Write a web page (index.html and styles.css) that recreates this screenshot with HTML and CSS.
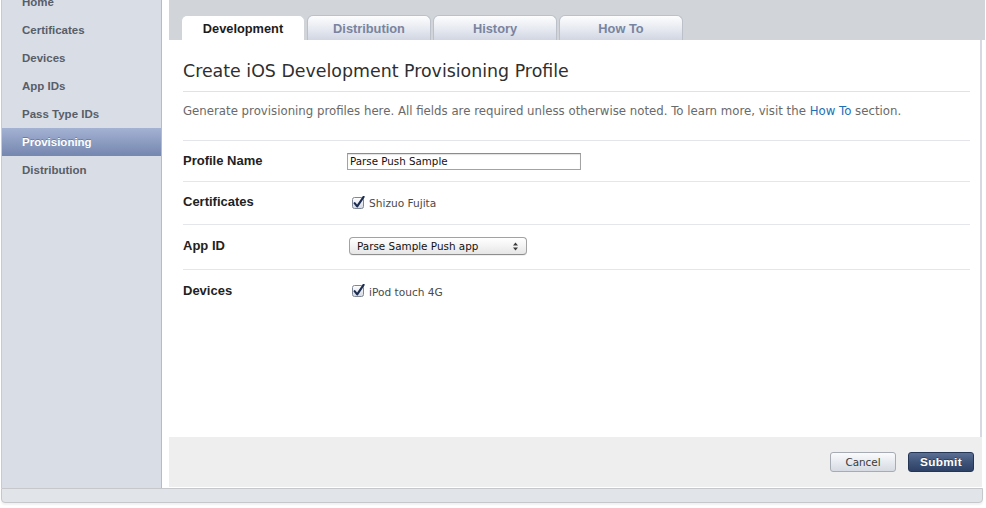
FILE: index.html
```html
<!DOCTYPE html>
<html lang="en">
<head>
<meta charset="utf-8">
<title>Create iOS Development Provisioning Profile</title>
<link rel="stylesheet" href="styles.css">
</head>
<body>
<div class="page">
  <div class="shell">
    <aside class="sidebar">
      <ul class="nav">
        <li class="nav-item">Home</li>
        <li class="nav-item">Certificates</li>
        <li class="nav-item">Devices</li>
        <li class="nav-item">App IDs</li>
        <li class="nav-item">Pass Type IDs</li>
        <li class="nav-item is-active">Provisioning</li>
        <li class="nav-item">Distribution</li>
      </ul>
    </aside>
    <main class="main">
      <div class="tabstrip">
        <div class="tab is-active">Development</div>
        <div class="tab">Distribution</div>
        <div class="tab">History</div>
        <div class="tab">How To</div>
      </div>
      <section class="panel">
        <h1 class="title">Create iOS Development Provisioning Profile</h1>
        <p class="intro">Generate provisioning profiles here. All fields are required unless otherwise noted. To learn more, visit the <a class="link" href="#">How To</a> section.</p>
        <div class="row row-name">
          <div class="label">Profile Name</div>
          <div class="control"><input class="text-input" type="text" value="Parse Push Sample"></div>
        </div>
        <div class="row row-cert">
          <div class="label">Certificates</div>
          <div class="control">
            <span class="check">
              <svg class="checkbox" width="13" height="13" viewBox="0 0 13 13">
                <defs>
                  <linearGradient id="cbg" x1="0" y1="0" x2="0" y2="1">
                    <stop offset="0" stop-color="#ffffff"/>
                    <stop offset="1" stop-color="#d3d8e2"/>
                  </linearGradient>
                </defs>
                <rect x="0.5" y="1.5" width="11" height="11" rx="2" fill="url(#cbg)" stroke="#7f8796"/>
                <path d="M2.6 7.2 L5.2 10.4 L11.6 0.8" fill="none" stroke="#1c2d52" stroke-width="2.1" stroke-linecap="round" stroke-linejoin="round"/>
              </svg>
              <span class="check-text">Shizuo Fujita</span>
            </span>
          </div>
        </div>
        <div class="row row-app">
          <div class="label">App ID</div>
          <div class="control">
            <div class="select">
              <span class="select-text">Parse Sample Push app</span>
              <svg class="select-arrows" width="5" height="9" viewBox="0 0 5 9">
                <path d="M0 3.6 L2.5 0.4 L5 3.6 Z M0 5.4 L2.5 8.6 L5 5.4 Z" fill="#3a3a3a"/>
              </svg>
            </div>
          </div>
        </div>
        <div class="row row-dev">
          <div class="label">Devices</div>
          <div class="control">
            <span class="check">
              <svg class="checkbox" width="13" height="13" viewBox="0 0 13 13">
                <defs>
                  <linearGradient id="cbg2" x1="0" y1="0" x2="0" y2="1">
                    <stop offset="0" stop-color="#ffffff"/>
                    <stop offset="1" stop-color="#d3d8e2"/>
                  </linearGradient>
                </defs>
                <rect x="0.5" y="1.5" width="11" height="11" rx="2" fill="url(#cbg2)" stroke="#7f8796"/>
                <path d="M2.6 7.2 L5.2 10.4 L11.6 0.8" fill="none" stroke="#1c2d52" stroke-width="2.1" stroke-linecap="round" stroke-linejoin="round"/>
              </svg>
              <span class="check-text">iPod touch 4G</span>
            </span>
          </div>
        </div>
      </section>
      <footer class="actions">
        <button class="btn btn-cancel" type="button">Cancel</button>
        <button class="btn btn-submit" type="button">Submit</button>
      </footer>
    </main>
  </div>
  <div class="bottombar"></div>
</div>
</body>
</html>
```

FILE: styles.css
```css
* { box-sizing: border-box; }

html, body {
  margin: 0;
  padding: 0;
  background: #ffffff;
  font-family: "DejaVu Sans", Verdana, sans-serif;
  color: #333;
}

.page {
  width: 986px;
  height: 508px;
  overflow: hidden;
}

.shell {
  display: flex;
  width: 985px;
  height: 488px;
  margin-left: 1px;
  border-left: 1px solid #c6cad1;
}

/* Sidebar */
.sidebar {
  width: 160px;
  flex: none;
  background: #d8dde6;
  border-right: 1px solid #b6bbc6;
  overflow: hidden;
}

.nav {
  list-style: none;
  margin: -12px 0 0 0;
  padding: 0;
}

.nav-item {
  height: 28px;
  line-height: 28px;
  padding-left: 20px;
  font-family: "Liberation Sans", Arial, sans-serif;
  font-size: 11.5px;
  font-weight: bold;
  color: #585e68;
}

.nav-item.is-active {
  background: linear-gradient(#a3b2d3, #7586af);
  color: #ffffff;
  text-shadow: 0 -1px 0 rgba(40, 50, 80, 0.35);
}

/* Main */
.main {
  flex: 1;
  display: flex;
  flex-direction: column;
  padding-left: 7px;
  padding-right: 1px;
}

.tabstrip {
  height: 40px;
  flex: none;
  background: #d1d5d9;
  display: flex;
  align-items: flex-end;
  padding-left: 12px;
  gap: 2px;
}

.tab {
  width: 124px;
  height: 25px;
  display: flex;
  align-items: center;
  justify-content: center;
  border: 1px solid #bcc0c8;
  border-bottom: none;
  border-radius: 6px 6px 0 0;
  background: linear-gradient(#fdfdfe, #e6e9f0 55%, #d1d6e2);
  color: #7884a0;
  font-family: "Liberation Sans", Arial, sans-serif;
  font-size: 12.8px;
  font-weight: bold;
}

.tab.is-active {
  background: #ffffff;
  border-color: #d0d3d8;
  color: #1c1c1c;
}

.panel {
  height: 397px;
  flex: none;
  margin-right: 3px;
  background: #ffffff;
  border-right: 2px solid #d8d8e2;
  padding: 0 10px 0 14px;
}

.title {
  margin: 20px 0 0 0;
  padding-bottom: 9px;
  border-bottom: 1px solid #e1e2e6;
  font-size: 17.4px;
  line-height: 22px;
  font-weight: normal;
  color: #2f2f2f;
}

.intro {
  margin: 11px 0 0 0;
  padding-bottom: 21px;
  border-bottom: 1px solid #e4e5ea;
  font-size: 11.75px;
  line-height: 16px;
  color: #6a6a6a;
  white-space: nowrap;
}

.link {
  color: #1e6fb5;
  text-decoration: none;
}

.row {
  display: grid;
  grid-template-columns: 164px 1fr;
  align-items: center;
  border-bottom: 1px solid #e4e6ec;
}

.row-name { height: 41px; }
.row-cert { height: 43px; padding-bottom: 2px; }
.row-app  { height: 45px; padding-bottom: 2px; }
.row-dev  { height: 41px; border-bottom: none; }

.label {
  font-family: "Liberation Sans", Arial, sans-serif;
  font-size: 13px;
  line-height: 16px;
  font-weight: bold;
  color: #222;
}

.control {
  display: flex;
  align-items: center;
}

.text-input {
  width: 234px;
  height: 17px;
  margin: 0;
  padding: 0 0 0 2px;
  border: 1px solid #a3a3a3;
  border-top-color: #8c8c8c;
  box-shadow: inset 0 1px 1px rgba(0, 0, 0, 0.12);
  font-family: "DejaVu Sans", Verdana, sans-serif;
  font-size: 10.3px;
  color: #111;
  background: #ffffff;
  outline: none;
}

.check {
  display: flex;
  align-items: center;
  margin-left: 5px;
  gap: 4px;
}

.checkbox {
  display: block;
  flex: none;
}

.check-text {
  font-size: 10.6px;
  line-height: 14px;
  color: #4a4a4a;
  padding-top: 2px;
}

.select {
  margin-left: 2px;
  width: 178px;
  height: 18px;
  display: flex;
  align-items: center;
  justify-content: space-between;
  padding: 0 8px 0 7px;
  border: 1px solid #a2a2a2;
  border-bottom-color: #8e8e8e;
  border-radius: 4px;
  background: linear-gradient(#ffffff, #f3f3f3 50%, #e6e6e6);
  box-shadow: 0 1px 0 rgba(0, 0, 0, 0.06);
}

.select-text {
  font-size: 10.4px;
  color: #111;
}

.select-arrows {
  display: block;
}

/* Footer actions */
.actions {
  height: 50px;
  flex: none;
  margin-right: 3px;
  background: #eeeeee;
  display: flex;
  align-items: center;
  justify-content: flex-end;
  gap: 12px;
  padding-right: 8px;
}

.btn {
  width: 66px;
  height: 20px;
  margin: 0;
  padding: 0;
  border-radius: 3px;
  cursor: pointer;
}

.btn-cancel {
  border: 1px solid #a7abb3;
  background: linear-gradient(#fafbfc, #e4e7ed 60%, #d6dae2);
  color: #3a3a3a;
  font-family: "DejaVu Sans", Verdana, sans-serif;
  font-size: 10.4px;
}

.btn-submit {
  border: 1px solid #253655;
  background: linear-gradient(#5c6f95, #3f5479 50%, #2d4166);
  color: #ffffff;
  font-family: "Liberation Sans", Arial, sans-serif;
  font-size: 11.8px;
  font-weight: bold;
  letter-spacing: 0.3px;
  text-shadow: 0 -1px 0 rgba(0, 0, 0, 0.35);
}

/* Bottom bar */
.bottombar {
  width: 982px;
  height: 15px;
  margin-left: 1px;
  background: #e1e4e9;
  border: 1px solid #c6c7ca;
  border-radius: 0 0 4px 4px;
  box-shadow: 0 2px 2px rgba(0, 0, 0, 0.06);
}
```
